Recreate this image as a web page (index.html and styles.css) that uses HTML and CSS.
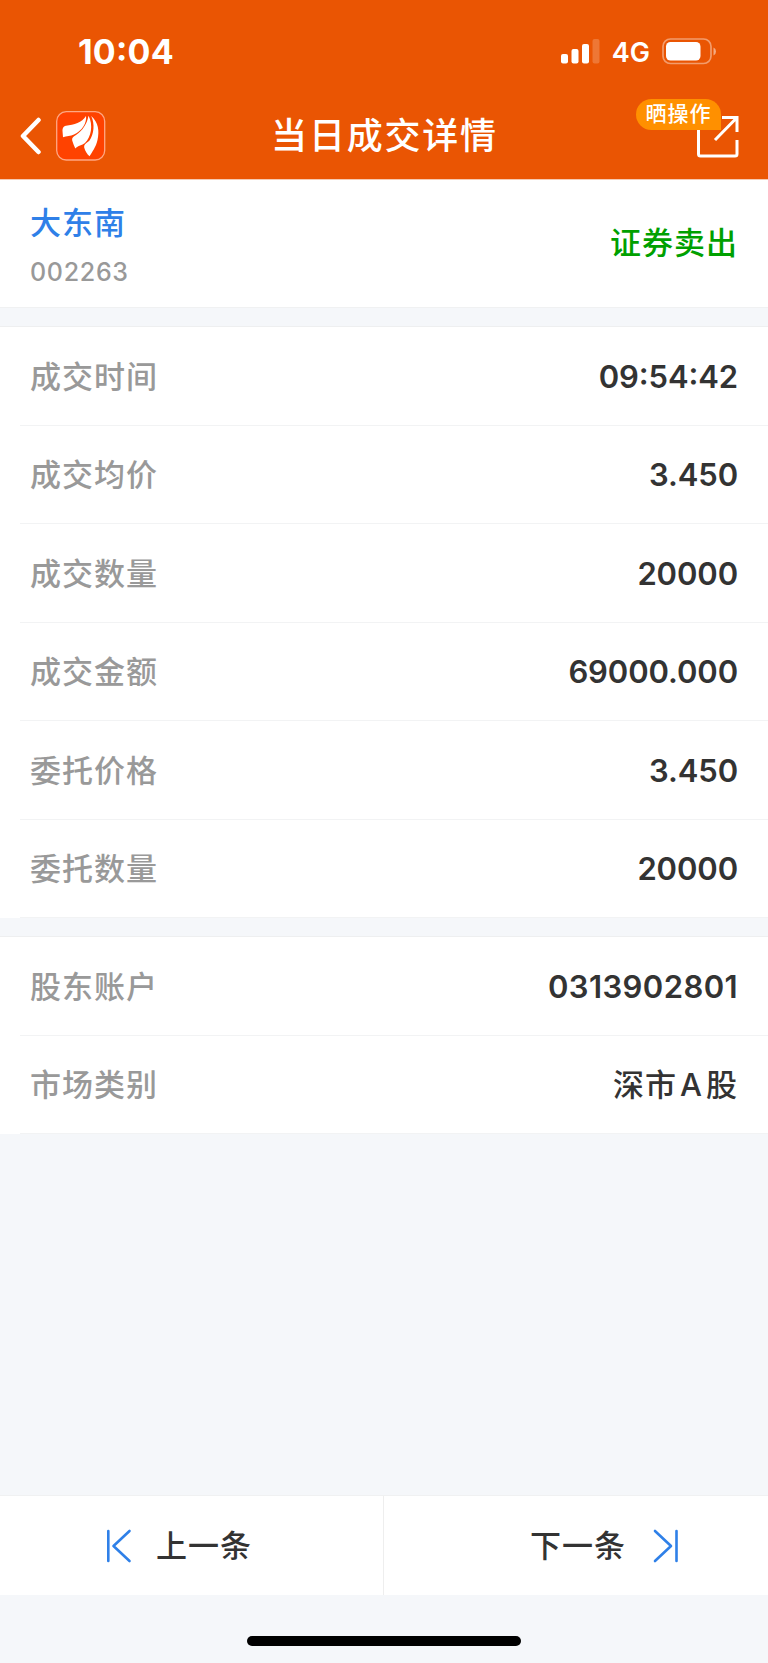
FILE: index.html
```
<!doctype html>
<html lang="zh-CN">

	<head>
		<meta charset="utf-8">
		<title>当日成交详情</title>
		<link rel="stylesheet" href="styles.css">
	</head>

	<body>
		<div class="header">
			<!-- 状态栏 -->
			<div class="status">
				<span class="time">10:04</span>
				<div class="status-right">
					<svg class="signal" width="39" height="25" viewBox="0 0 39 25" fill="#fff">
						<rect x="0" y="15" width="7" height="9.5" rx="2" />
						<rect x="10.5" y="10" width="7" height="14.5" rx="2" />
						<rect x="21" y="5" width="7" height="19.5" rx="2" />
						<rect x="31.5" y="0" width="7" height="24.5" rx="2" opacity=".2" />
					</svg>
					<span class="network">4G</span>
					<svg class="battery" width="55" height="27" viewBox="0 0 55 27">
						<rect x="1" y="1" width="48" height="24.5" rx="7.5" fill="none" stroke="#fff" stroke-width="1.7" opacity=".42" />
						<rect x="4" y="4" width="34.5" height="18.5" rx="4.5" fill="#fff" />
						<path d="M51.5 9.500q2.500 1 2.500 4t-2.500 4z" fill="#fff" opacity=".5" />
					</svg>
				</div>
			</div>
			<!-- 导航栏 -->
			<div class="nav">
				<div class="nav-left">
					<svg width="22" height="38" viewBox="0 0 22 38" fill="none" stroke="#fff" stroke-width="4.500" stroke-linecap="round" stroke-linejoin="round">
						<path d="M18.500 3L3 19l15.500 16" />
					</svg>
					<svg class="logo" width="50" height="50" viewBox="0 0 50 50">
						<rect x=".7" y=".7" width="48" height="48.300" rx="9.500" fill="#ff4200" stroke="#ffa783" stroke-width="1.300" />
						<g fill="#fff">
							<path d="M30 5C26 11.500 18 14 10 14.700C7 15.200 6.500 17.500 6.500 20L7 26.200C10.500 25 14.500 25 18 23.500C26 20 31 12 30 5z" />
							<path d="M32.500 4.700C31 13 26.500 19.500 20 24C17 26 15.700 27 16.200 29.500C17 32 18 35 19.300 37.500C22 34.500 26 34.500 29 32C35 26 37.500 14 32.500 4.700z" />
							<path d="M35.200 5C39 13 38 23 33.500 29.500C30.500 32.500 27.800 33 28.200 36.500C29 40 31 43 33.500 45.300C36 41 40 36 41.500 29C43.500 20 42.500 11.500 35.200 5z" />
						</g>
					</svg>
				</div>
				<h1 class="title">当日成交详情</h1>
				<div class="share">
					<svg width="42" height="42" viewBox="0 0 42 42" fill="none" stroke="#fff" stroke-width="3">
						<path d="M1.500 8v30q0 2 2 2h34.500q2 0 2-2V24" />
						<path d="M25 1.500h15v14.500M40 1.500L18 24" />
					</svg>
					<span class="badge">晒操作</span>
				</div>
			</div>
		</div>

		<div class="stock">
			<div class="stock-info">
				<div class="name">大东南</div>
				<div class="code">002263</div>
			</div>
			<div class="side">证券卖出</div>
		</div>

		<!-- 成交明细 -->
		<div class="list">
			<div class="row"><span>成交时间</span><b>09:54:42</b></div>
			<div class="row"><span>成交均价</span><b>3.450</b></div>
			<div class="row"><span>成交数量</span><b>20000</b></div>
			<div class="row"><span>成交金额</span><b>69000.000</b></div>
			<div class="row"><span>委托价格</span><b>3.450</b></div>
			<div class="row"><span>委托数量</span><b>20000</b></div>
		</div>
		<div class="list">
			<div class="row"><span>股东账户</span><b class="account">0313902801</b></div>
			<div class="row"><span>市场类别</span><b class="cn">深市<i>A</i>股</b></div>
		</div>

		<!-- 底部翻页 -->
		<div class="pager">
			<div class="prev">
				<svg width="26" height="34" viewBox="0 0 26 34" fill="none" stroke="#2f80e8" stroke-width="2.600" stroke-linecap="round" stroke-linejoin="round">
					<path d="M2.300 2v30M23.500 2L7.500 17l16 15" />
				</svg>
				<span>上一条</span>
			</div>
			<div class="next">
				<span>下一条</span>
				<svg width="26" height="34" viewBox="0 0 26 34" fill="none" stroke="#2f80e8" stroke-width="2.600" stroke-linecap="round" stroke-linejoin="round">
					<path d="M23.500 2v30M2 2l16 15l-16 15" />
				</svg>
			</div>
		</div>
		<div class="home"></div>
	</body>

</html>
```
FILE: styles.css
```
* {
	box-sizing: border-box;
}

body {
	margin: 0;
	height: 1663px;
	display: flex;
	flex-direction: column;
	background: #f5f7fa;
	color: #333;
	font-family: Inter, "Noto Sans CJK SC", sans-serif;
	font-size: 31px;
	font-weight: 500;
}

svg {
	display: block;
	flex: none;
}

.header {
	height: 179px;
	flex: none;
	background: #ea5503;
	color: #fff;
}

.status {
	height: 91px;
	padding: 12px 51px 0 78px;
	display: flex;
	justify-content: space-between;
	align-items: center;
}

.time {
	padding-bottom: 1px;
	font-size: 34px;
	font-weight: 700;
	letter-spacing: .2px;
	font-feature-settings: "case";
}

.status-right {
	display: flex;
	align-items: center;
}

.network {
	margin: 0 12px 0 12px;
	padding-top: 2px;
	font-size: 27px;
	font-weight: 600;
}

.nav {
	height: 88px;
	padding: 2px 29px 0 20px;
	display: grid;
	grid-template-columns: 1fr auto 1fr;
	align-items: center;
}

.nav-left {
	display: flex;
	align-items: center;
	gap: 14px;
}

.title {
	margin: 0 0 0 10px;
	font-size: 36px;
	font-weight: 500;
	line-height: 50px;
	letter-spacing: 1.8px;
}

.share {
	position: relative;
	justify-self: end;
	margin-top: 2px;
}

/* 分享图标左上角的气泡 */
.badge {
	position: absolute;
	right: 18px;
	top: -17px;
	width: 85px;
	height: 31px;
	border-radius: 16px 16px 0 16px;
	background: #ff9000;
	font-size: 21px;
	line-height: 30px;
	letter-spacing: 1px;
	text-align: center;
}

.stock {
	height: 129px;
	flex: none;
	padding: 0 30px;
	display: flex;
	justify-content: space-between;
	align-items: center;
	background: #fff;
	border-top: 1px solid #f5c9b2;
	border-bottom: 1px solid #f0f1f2;
	letter-spacing: 1px;
}

.stock-info {
	padding-top: 5px;
}

.name {
	color: #2f80e8;
	line-height: 46px;
}

.code {
	margin-top: 6px;
	color: #999;
	font-size: 25px;
	line-height: 40px;
	letter-spacing: .7px;
}

.side {
	padding-bottom: 7px;
	color: #00a000;
}

.list {
	flex: none;
	margin-top: 18px;
	padding-left: 20px;
	background: #fff;
	border-top: 1px solid #eeeff0;
}

.row {
	height: 98.500px;
	padding: 0 30px 0 10px;
	display: flex;
	justify-content: space-between;
	align-items: center;
	border-bottom: 1px solid #f2f3f4;
}

.row span {
	padding-bottom: 3px;
	color: #999;
	letter-spacing: 1px;
}

.row b {
	padding-top: 1px;
	font-weight: 600;
	letter-spacing: -.1px;
	font-feature-settings: "case";
}

.row .account {
	letter-spacing: .4px;
}

.row .cn {
	padding: 0 0 3px;
	font-weight: 500;
	letter-spacing: 1px;
}

.row i {
	margin: 0 3px;
	font-style: normal;
}

.pager {
	height: 100px;
	flex: none;
	margin-top: auto;
	display: grid;
	grid-template-columns: 1fr 1fr;
	background: #fff;
	border-top: 1px solid #f0f1f2;
	letter-spacing: 1px;
}

.prev,
.next {
	display: flex;
	align-items: center;
	gap: 25px;
}

.pager span {
	padding-bottom: 4px;
}

.prev {
	padding-left: 106px;
	border-right: 1px solid #eee;
}

.prev span {
	margin-left: -1px;
}

.next {
	justify-content: flex-end;
	padding-right: 89px;
}

.next span {
	margin-right: 2px;
}

.home {
	width: 274px;
	height: 10px;
	flex: none;
	margin: 41px auto 17px;
	border-radius: 5px;
	background: #000;
}
```
